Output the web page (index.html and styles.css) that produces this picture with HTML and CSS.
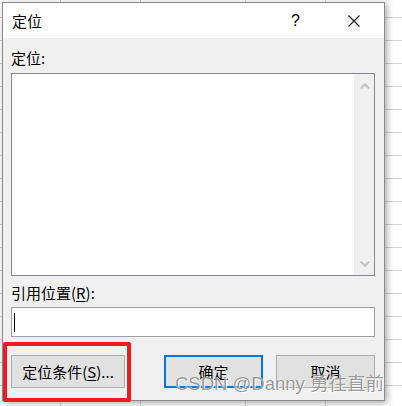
FILE: index.html
```html
<!DOCTYPE html>
<html lang="zh-CN">
<head>
<meta charset="utf-8">
<title>定位</title>
<link rel="stylesheet" href="styles.css">
</head>
<body>
<div class="sheet">
  <div class="dialog">
    <div class="titlebar">
      <span class="title">定位</span>
      <span class="help">?</span>
      <span class="close">
        <svg width="12" height="12" viewBox="0 0 12 12"><path d="M0.5 0.5 L11.5 11.5 M11.5 0.5 L0.5 11.5" stroke="#1a1a1a" stroke-width="1.1" fill="none"/></svg>
      </span>
    </div>
    <div class="content">
      <div class="label">定位:</div>
      <div class="listbox">
        <div class="listarea"></div>
        <div class="scrollbar">
          <svg width="10" height="6" viewBox="0 0 10 6"><path d="M1 5.2 L5 1.2 L9 5.2" stroke="#c2c2c2" stroke-width="2" fill="none"/></svg>
          <svg width="10" height="6" viewBox="0 0 10 6"><path d="M1 0.8 L5 4.8 L9 0.8" stroke="#c2c2c2" stroke-width="2" fill="none"/></svg>
        </div>
      </div>
      <div class="label label-ref">引用位置(<u>R</u>):</div>
      <div class="input"><span class="caret"></span></div>
      <div class="buttons">
        <div class="btn btn-special">定位条件(<u>S</u>)...</div>
        <div class="btn btn-ok">确定</div>
        <div class="btn btn-cancel">取消</div>
      </div>
    </div>
    <div class="highlight"></div>
  </div>
  <div class="watermark">CSDN @Danny 勇往直前</div>
</div>
</body>
</html>
```
FILE: styles.css
```css
html, body {
  margin: 0;
  padding: 0;
}
body {
  width: 402px;
  height: 406px;
  overflow: hidden;
  font-family: "Noto Sans CJK SC", "Liberation Sans", sans-serif;
  color: #000;
}
.sheet {
  position: relative;
  width: 402px;
  height: 406px;
  background-color: #fff;
  background-image:
    linear-gradient(#d4d4d4, #d4d4d4),
    linear-gradient(#d4d4d4, #d4d4d4),
    linear-gradient(#d4d4d4, #d4d4d4),
    linear-gradient(#d4d4d4, #d4d4d4),
    repeating-linear-gradient(to bottom, transparent 0 17px, #d4d4d4 17px 18px, transparent 18px 23px);
  background-size: 1px 100%, 1px 100%, 1px 100%, 1px 100%, 100% 100%;
  background-position: 60px 0, 140px 0, 245px 0, 325px 0, 0 0;
  background-repeat: no-repeat;
  padding: 2px 0 0 2px;
  box-sizing: border-box;
}
.dialog {
  position: relative;
  width: 383px;
  height: 399px;
  box-sizing: border-box;
  border: 1px solid #8a8a8a;
  background: #f0f0f0;
  box-shadow: 2px 2px 7px rgba(0, 0, 0, 0.35);
  display: flex;
  flex-direction: column;
}
.titlebar {
  height: 35px;
  background: #fff;
  display: flex;
  align-items: center;
  flex: none;
}
.title {
  padding-left: 9px;
  font-size: 15px;
  line-height: 20px;
  flex: 1;
}
.help {
  font-family: "Liberation Sans", sans-serif;
  font-size: 16px;
  width: 12px;
  margin-right: 45px;
  line-height: 20px;
}
.close {
  width: 12px;
  height: 12px;
  margin-right: 24px;
  display: flex;
}
.content {
  padding: 9px 9px 0 8px;
  display: flex;
  flex-direction: column;
}
.label {
  font-size: 15px;
  line-height: 21px;
  height: 21px;
}
.label u, .btn u {
  text-decoration-thickness: 1px;
  text-underline-offset: 2px;
}
.listbox {
  margin-top: 5px;
  height: 203px;
  box-sizing: border-box;
  border: 1px solid #828790;
  display: flex;
}
.listarea {
  flex: 1;
  background: #fff;
}
.scrollbar {
  width: 20px;
  background: #f0f0f0;
  display: flex;
  flex-direction: column;
  justify-content: space-between;
  align-items: center;
  padding: 9px 0 8px;
}
.scrollbar svg {
  display: block;
  margin-left: 1px;
}
.label-ref {
  margin-top: 6px;
}
.input {
  margin-top: 4px;
  height: 30px;
  box-sizing: border-box;
  border: 1px solid #a0a0a0;
  background: #fff;
  display: flex;
  align-items: center;
  padding-left: 2px;
}
.caret {
  width: 1px;
  height: 19px;
  background: #000;
}
.buttons {
  margin-top: 18px;
  display: flex;
}
.btn {
  height: 33px;
  box-sizing: border-box;
  border: 1px solid #adadad;
  background: #e1e1e1;
  font-size: 15px;
  display: flex;
  align-items: center;
  justify-content: center;
}
.btn-special {
  width: 114px;
}
.btn-ok {
  width: 99px;
  margin-left: 39px;
  border: 2px solid #0078d7;
}
.btn-cancel {
  width: 99px;
  margin-left: 13px;
}
.highlight {
  position: absolute;
  left: 0px;
  top: 339px;
  width: 128px;
  height: 60px;
  box-sizing: border-box;
  border: 4px solid #ea1c24;
  border-radius: 2px;
}
.watermark {
  position: absolute;
  left: 175px;
  top: 372px;
  font-family: "Liberation Sans", "Noto Sans CJK SC", sans-serif;
  font-size: 18.5px;
  line-height: 24px;
  color: rgba(110, 110, 110, 0.7);
  text-shadow: 0 0 1px #fff, 1px 1px 0 rgba(255, 255, 255, 0.8);
  white-space: nowrap;
}
```
